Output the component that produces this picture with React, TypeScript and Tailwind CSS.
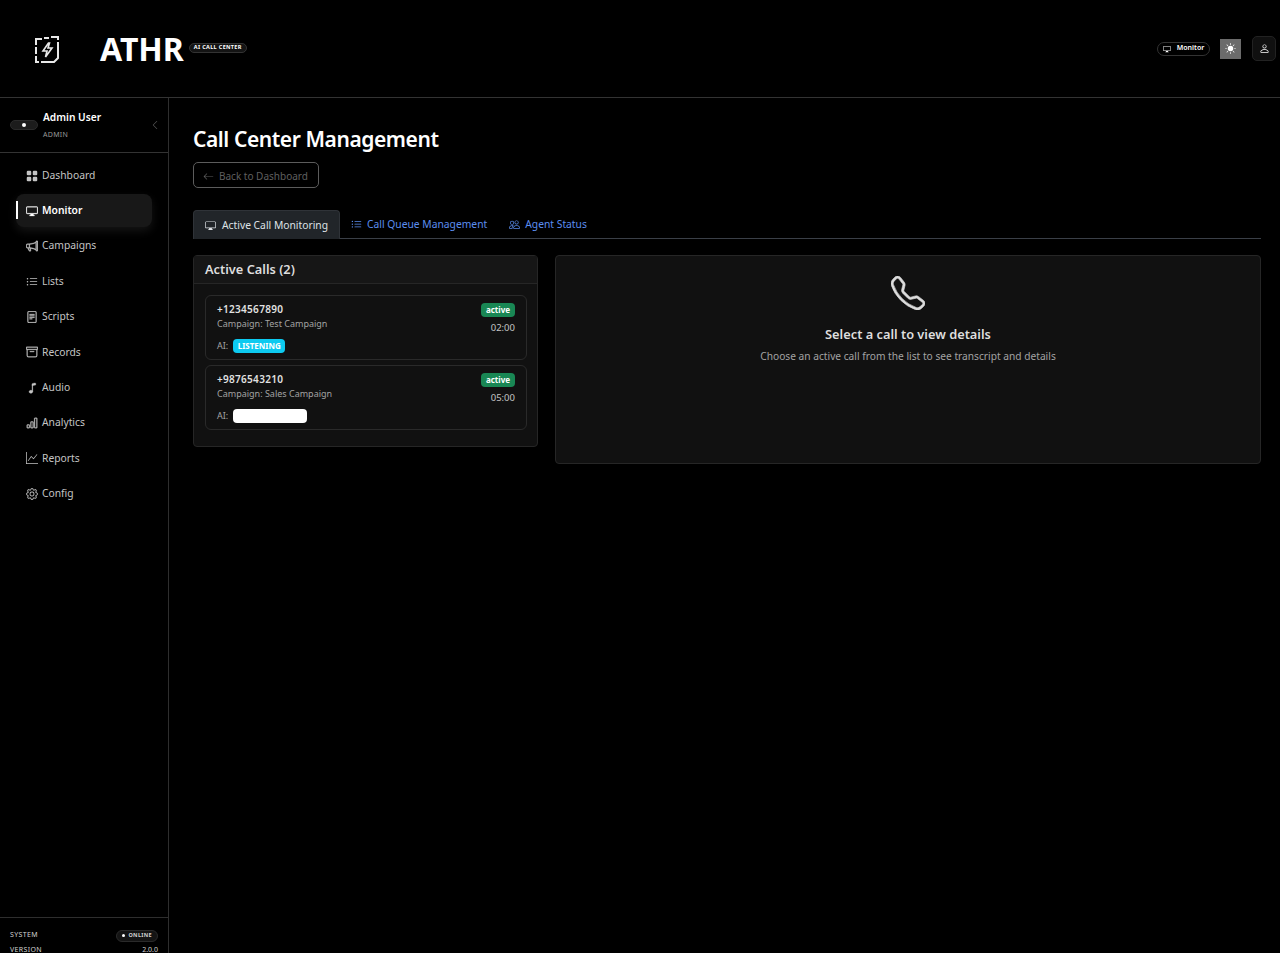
import type { ReactNode } from "react";
import {
  BsArchive,
  BsArrowLeft,
  BsBarChart,
  BsChevronLeft,
  BsDisplay,
  BsFileText,
  BsGear,
  BsGraphUp,
  BsGridFill,
  BsListUl,
  BsMegaphone,
  BsMusicNote,
  BsPeople,
  BsPerson,
  BsSunFill,
  BsTelephone,
} from "react-icons/bs";

const navItems = [
  { label: "Dashboard", icon: <BsGridFill /> },
  { label: "Monitor", icon: <BsDisplay stroke="currentColor" strokeWidth={0.4} />, active: true },
  { label: "Campaigns", icon: <BsMegaphone stroke="currentColor" strokeWidth={0.5} /> },
  { label: "Lists", icon: <BsListUl /> },
  { label: "Scripts", icon: <BsFileText stroke="currentColor" strokeWidth={0.4} /> },
  { label: "Records", icon: <BsArchive stroke="currentColor" strokeWidth={0.4} /> },
  { label: "Audio", icon: <BsMusicNote stroke="currentColor" strokeWidth={0.4} /> },
  { label: "Analytics", icon: <BsBarChart stroke="currentColor" strokeWidth={0.4} /> },
  { label: "Reports", icon: <BsGraphUp /> },
  { label: "Config", icon: <BsGear stroke="currentColor" strokeWidth={0.2} /> },
];

function Logo() {
  return (
    <svg width="28" height="30" viewBox="0 0 28 30" fill="none" stroke="#e8e8e8" strokeWidth="2">
      <path d="M3 11V5h6M11 4h5M18 3h7v3M25 8v16l-4 4H8M6 28H3v-6M3 20v-7" />
      <path d="M15.5 9 10 17h4l-1.5 6 6.5-9h-4l1.5-5z" strokeWidth="1.6" />
    </svg>
  );
}

function NavItem({ label, icon, active }: { label: string; icon: ReactNode; active?: boolean }) {
  return (
    <div
      className={
        active
          ? "relative flex h-[33px] items-center gap-[4px] rounded-lg bg-[#181818] pl-[10px] text-[10.3px] font-semibold text-white shadow-[0_4px_10px_rgba(60,60,60,0.35)]"
          : "flex h-[33px] items-center gap-[4px] pl-[10px] text-[10.3px] text-[#c4c4c4]"
      }
    >
      {active ? <span className="absolute left-0 top-[7px] h-[18px] w-[2px] bg-white" /> : null}
      <span className="flex w-[12px] justify-center text-[12px]">{icon}</span>
      {label}
    </div>
  );
}

function Sidebar() {
  return (
    <aside className="flex w-[169px] shrink-0 flex-col border-r border-[#2e2e2e]">
      <div className="flex h-[55px] items-center border-b border-[#333] pl-[10px] pr-[8px]">
        <span className="flex h-[10px] w-[28px] items-center justify-center rounded-full border border-[#2a2a2a] bg-[#1c1c1c]">
          <span className="h-[4px] w-[4px] rounded-full bg-white" />
        </span>
        <div className="ml-[5px] mt-[-2px] flex-1">
          <p className="text-[10.2px] font-semibold leading-[14px] text-white">Admin User</p>
          <p className="mt-[6px] text-[7px] leading-[9px] tracking-[0.04em] text-[#9a9a9a]">ADMIN</p>
        </div>
        <BsChevronLeft className="text-[10px] text-[#555]" />
      </div>
      <nav className="flex flex-col gap-[2.35px] px-[16px] pt-[6px]">
        {navItems.map((item) => (
          <NavItem key={item.label} {...item} />
        ))}
      </nav>
      <div className="mt-auto h-[36px] shrink-0 border-t border-[#2e2e2e] px-[10px] pt-[12px] text-[7px] tracking-[0.05em] text-[#d0d0d0]">
        <div className="flex h-[11px] items-center justify-between">
          <span>SYSTEM</span>
          <span className="flex h-[12px] items-center gap-[3px] rounded-full border border-[#2a2a2a] bg-[#141414] px-[5px] text-[5.5px] font-bold tracking-[0.06em]">
            <span className="h-[3px] w-[3px] rounded-full bg-white" />
            ONLINE
          </span>
        </div>
        <div className="mt-[4px] flex h-[11px] items-center justify-between">
          <span>VERSION</span>
          <span className="tracking-normal">2.0.0</span>
        </div>
      </div>
    </aside>
  );
}

function CallRow({
  phone,
  campaign,
  time,
  ai,
}: {
  phone: string;
  campaign: string;
  time: string;
  ai: ReactNode;
}) {
  return (
    <div className="flex h-[65px] justify-between rounded-md border border-[#2a2a2a] pl-[11px] pr-[11px] pt-[6px]">
      <div>
        <p className="text-[10px] font-semibold leading-[14px] tracking-[0.03em] text-[#e2e2e2]">{phone}</p>
        <p className="mt-[1px] text-[9px] leading-[13px] text-[#a3a3a3]">{campaign}</p>
        <div className="mt-[9px] flex items-center gap-[5px] text-[9px] text-[#a3a3a3]">AI: {ai}</div>
      </div>
      <div className="flex flex-col items-end pt-[1px]">
        <span className="flex h-[14px] w-[34px] items-center justify-center rounded bg-[#198754] text-[8px] font-bold text-white">
          active
        </span>
        <span className="mt-[4px] text-[9.5px] leading-[14px] text-[#c4c4c4]">{time}</span>
      </div>
    </div>
  );
}

export default function App() {
  return (
    <div className="flex h-[953px] flex-col overflow-hidden bg-black font-['Noto_Sans',sans-serif] text-white">
      <header className="flex h-[98px] shrink-0 items-center border-b border-[#333] pl-[33px] pr-[4px]">
        <Logo />
        <span className="ml-[39px] text-[32px] font-bold leading-none text-white">ATHR</span>
        <span className="ml-[5px] mt-[-2px] flex h-[10px] items-center rounded-full border border-[#333] bg-[#141414] px-[4px] text-[5.5px] font-bold tracking-[0.06em] text-white">
          AI CALL CENTER
        </span>
        <div className="ml-auto flex items-center">
          <span className="flex h-[14px] w-[53px] items-center justify-center gap-[6px] rounded-full border border-[#333] text-[7px] font-semibold text-white">
            <BsDisplay className="text-[8px]" />
            Monitor
          </span>
          <span className="ml-[10px] flex h-[20px] w-[21px] items-center justify-center bg-[#6b6b6b] text-[11px] text-white">
            <BsSunFill />
          </span>
          <span className="ml-[11px] flex h-[25px] w-[24px] items-center justify-center rounded-[5px] border border-[#222] bg-[#101010] text-[11px] text-white">
            <BsPerson />
          </span>
        </div>
      </header>

      <div className="flex flex-1">
        <Sidebar />
        <main className="flex-1 pl-[24px] pr-[19px] pt-[26px]">
          <h1 className="text-[21px] font-semibold leading-[30px] tracking-[-0.02em] text-white">
            Call Center Management
          </h1>
          <button className="mt-[8px] flex h-[26px] w-[126px] items-center gap-[5px] rounded-[5px] border border-[#5c5c5c] pl-[9px] pt-[2px] text-[10px] text-[#5f5f5f]">
            <BsArrowLeft className="text-[11px]" />
            Back to Dashboard
          </button>

          <div className="mt-[22px] flex h-[29px] items-end border-b border-[#3a3f47] text-[10.3px]">
            <div className="mb-[-1px] flex h-[29px] w-[147px] items-center gap-[6px] rounded-t-[4px] border border-b-0 border-[#2f3338] bg-[#212529] pl-[11px] pt-[1px] text-[#dee2e6]">
              <BsDisplay className="text-[11px]" />
              Active Call Monitoring
            </div>
            <div className="flex h-[28px] items-center gap-[5px] pl-[11px] pt-[1px] text-[#5b8def]">
              <BsListUl className="text-[11px]" />
              Call Queue Management
            </div>
            <div className="ml-[11px] flex h-[28px] items-center gap-[5px] pl-[11px] pt-[1px] text-[#5b8def]">
              <BsPeople className="text-[11px]" />
              Agent Status
            </div>
          </div>

          <div className="mt-[16px] flex items-start gap-[17px]">
            <section className="w-[345px] shrink-0 rounded border border-[#262626] bg-[#111]">
              <div className="flex h-[28px] items-center border-b border-[#262626] bg-[#161616] pl-[11px] text-[12.8px] font-semibold text-[#dedede]">
                Active Calls (2)
              </div>
              <div className="flex flex-col gap-[5px] pb-[16px] pl-[11px] pr-[10px] pt-[11px]">
                <CallRow
                  phone="+1234567890"
                  campaign="Campaign: Test Campaign"
                  time="02:00"
                  ai={
                    <span className="flex h-[14px] w-[52px] items-center justify-center rounded bg-[#0dcaf0] text-[8px] font-bold text-white">
                      LISTENING
                    </span>
                  }
                />
                <CallRow
                  phone="+9876543210"
                  campaign="Campaign: Sales Campaign"
                  time="05:00"
                  ai={<span className="h-[14px] w-[74px] rounded bg-white" />}
                />
              </div>
            </section>

            <section className="flex h-[209px] flex-1 flex-col items-center rounded border border-[#262626] bg-[#111] pt-[20px]">
              <BsTelephone className="text-[34px] text-[#dcdcdc]" stroke="currentColor" strokeWidth={0.3} />
              <p className="mt-[15px] text-[12.8px] font-semibold leading-[18px] text-[#dedede]">
                Select a call to view details
              </p>
              <p className="mt-[6px] text-[10.2px] leading-[14px] text-[#a3a3a3]">
                Choose an active call from the list to see transcript and details
              </p>
            </section>
          </div>
        </main>
      </div>
    </div>
  );
}
